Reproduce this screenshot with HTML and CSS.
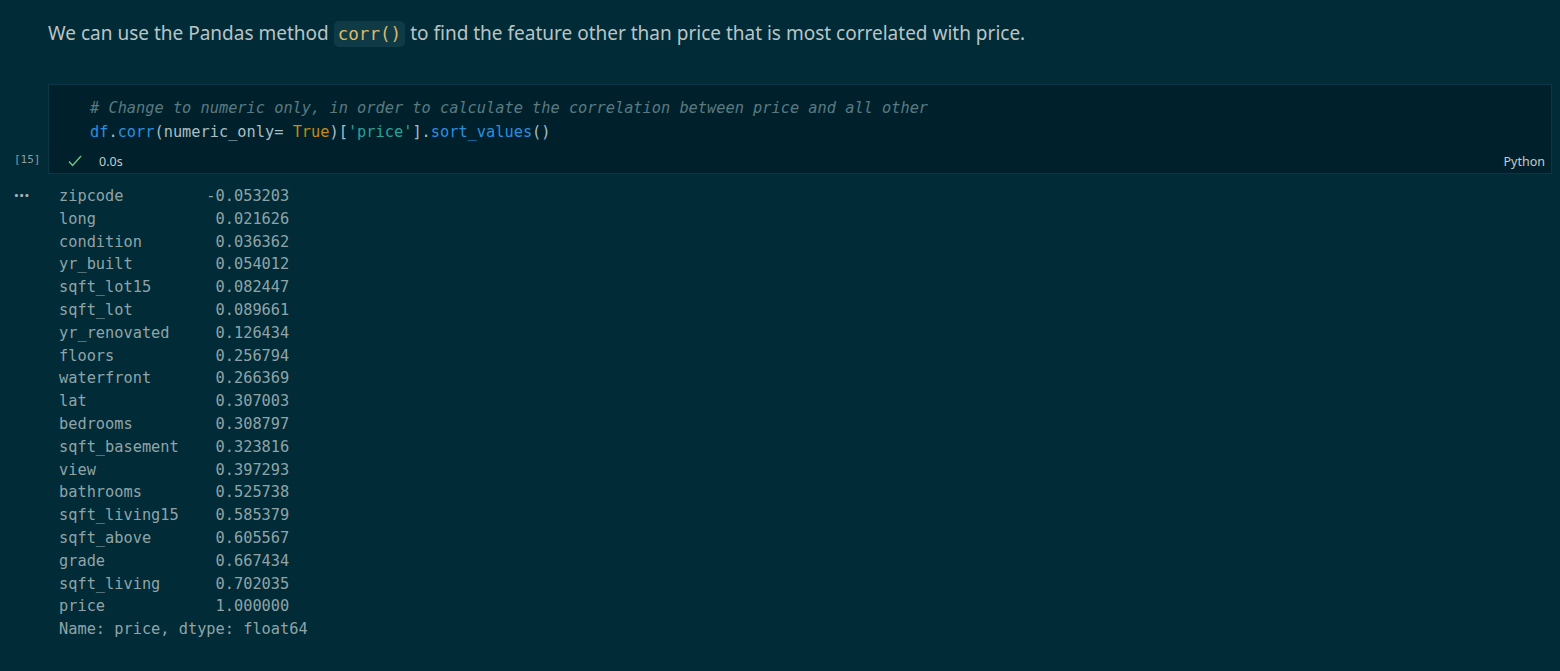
FILE: index.html
```html
<!DOCTYPE html>
<html>
<head>
<meta charset="utf-8">
<link rel="stylesheet" href="styles.css">
</head>
<body>
<div class="md">
  <p>We can use the Pandas method <code class="inline">corr()</code> to find the feature other than price that is most correlated with price.</p>
</div>

<div class="cell">
  <div class="gutter"><span class="count">[15]</span></div>
  <div class="cell-box">
    <pre class="code"><span class="cm"># Change to numeric only, in order to calculate the correlation between price and all other</span>
<span class="fn">df</span><span class="pl">.</span><span class="fn">corr</span><span class="pl">(numeric_only= </span><span class="kw">True</span><span class="pl">)[</span><span class="st">'price'</span><span class="pl">].</span><span class="fn">sort_values</span><span class="pl">()</span></pre>
    <div class="status">
      <svg class="check" width="14" height="12" viewBox="0 0 14 12"><polyline points="1,6.5 4.6,10.5 13,1" fill="none" stroke="#6fc38a" stroke-width="1.4"/></svg>
      <span class="time">0.0s</span>
      <span class="lang">Python</span>
    </div>
  </div>
</div>

<div class="output">
  <div class="gutter"><span class="dots">···</span></div>
  <pre class="out">zipcode         -0.053203
long             0.021626
condition        0.036362
yr_built         0.054012
sqft_lot15       0.082447
sqft_lot         0.089661
yr_renovated     0.126434
floors           0.256794
waterfront       0.266369
lat              0.307003
bedrooms         0.308797
sqft_basement    0.323816
view             0.397293
bathrooms        0.525738
sqft_living15    0.585379
sqft_above       0.605567
grade            0.667434
sqft_living      0.702035
price            1.000000
Name: price, dtype: float64</pre>
</div>
</body>
</html>
```

FILE: styles.css
```css
html, body {
  margin: 0;
  padding: 0;
  background: #002b37;
  height: 100%;
}

body {
  font-family: "Noto Sans", "Open Sans", sans-serif;
  color: #b9c4c6;
}

.md {
  padding: 19px 0 0 48px;
}

.md p {
  margin: 0;
  font-size: 19px;
  line-height: 28px;
}

.inline {
  font-family: "DejaVu Sans Mono", monospace;
  font-size: 17.6px;
  color: #dcb76a;
  background: #0e3b46;
  border-radius: 5px;
  padding: 3px 4px;
}

.cell {
  display: flex;
  margin-top: 36px;
}

.gutter {
  width: 48px;
  flex: none;
  display: flex;
  box-sizing: border-box;
  padding-left: 14px;
}

.cell .gutter {
  align-items: flex-end;
  padding-bottom: 4px;
}

.count {
  font-family: "DejaVu Sans Mono", monospace;
  font-size: 11px;
  line-height: 20px;
  color: #8a9da1;
}

.cell-box {
  flex: 1;
  margin-right: 8px;
  background: #00212b;
  border: 1px solid #0b3643;
  padding: 11px 6px 2px 41px;
  display: flex;
  flex-direction: column;
}

.code {
  margin: 0;
  font-family: "DejaVu Sans Mono", monospace;
  font-size: 15.3px;
  line-height: 24px;
  color: #9fb6bd;
}

.cm { color: #5a7a82; font-style: italic; }
.fn { color: #2b8fe0; }
.pl { color: #a9bfc5; }
.kw { color: #c48a12; }
.st { color: #2aa198; }

.status {
  display: flex;
  align-items: center;
  margin: 7px 0 0 -22px;
  height: 20px;
  font-size: 12.5px;
}

.check {
  margin-right: 17px;
}

.time {
  color: #c3ccce;
}

.lang {
  margin-left: auto;
  color: #c3ccce;
}

.output {
  display: flex;
  margin-top: 11px;
}

.output .gutter {
  align-items: flex-start;
}

.dots {
  font-size: 17px;
  font-weight: bold;
  line-height: 22.8px;
  color: #a7b5b8;
  letter-spacing: 0.5px;
}

.out {
  margin: 0 0 0 11px;
  font-family: "DejaVu Sans Mono", monospace;
  font-size: 15.3px;
  line-height: 22.8px;
  color: #90a4a8;
}
```
